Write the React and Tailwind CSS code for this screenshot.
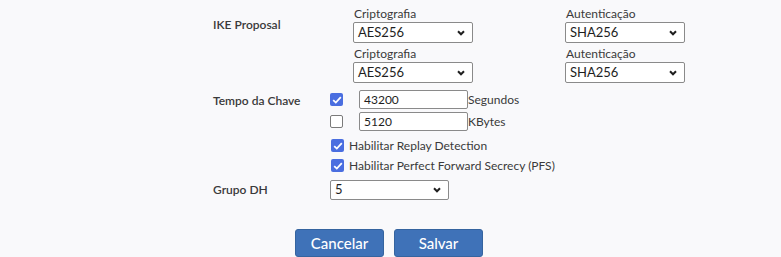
import React from 'react';

const Chevron = () => (
    <svg width="8" height="6" viewBox="0 0 8 6" className="shrink-0">
        <path d="M1 1.3 L4 4.3 L7 1.3" fill="none" stroke="#1f1f1f" strokeWidth="2" />
    </svg>
);

function FakeSelect({ value, width = 'w-[120px]', height = 'h-[21px]' }) {
    return (
        <div className={`${width} ${height} flex items-center justify-between bg-white border border-[#8a8a8a] rounded-[2px] pl-[4px] pr-[7px] text-[13px] text-[#1e1e1e]`}>
            <span>{value}</span>
            <Chevron />
        </div>
    );
}

function Checkbox({ checked }) {
    return checked ? (
        <div className="w-[13px] h-[13px] rounded-[2px] bg-[#4a6ee0] flex items-center justify-center">
            <svg width="10" height="8" viewBox="0 0 10 8">
                <path d="M1.2 4.2 L3.8 6.6 L8.8 1.2" fill="none" stroke="#fff" strokeWidth="1.8" />
            </svg>
        </div>
    ) : (
        <div className="w-[13px] h-[13px] rounded-[2px] bg-white border border-[#7a7a7a]" />
    );
}

function Field({ label, value }) {
    return (
        <div className="flex flex-col">
            <span className="text-[12px] leading-[16px] text-[#3a3a3a] pl-[1px]">{label}</span>
            <FakeSelect value={value} />
        </div>
    );
}

function TimeRow({ checked, value, unit }) {
    return (
        <div className="flex items-center h-[19px]">
            <Checkbox checked={checked} />
            <div className="ml-[16px] w-[109px] h-[19px] bg-white border border-[#8a8a8a] rounded-[2px] pl-[4px] flex items-center text-[12px] text-[#1e1e1e]">
                {value}
            </div>
            <span className="text-[12px] leading-[16px] text-[#3a3a3a]">{unit}</span>
        </div>
    );
}

export default function App() {
    return (
        <div className="w-[781px] h-[257px] bg-[#f9f9fb] pl-[213px] pt-[6px] font-['Lato',sans-serif] overflow-hidden">
            {/* IKE Proposal */}
            <div className="flex">
                <div className="w-[140px] pt-[11px] text-[12px] leading-[16px] text-[#3a3a3a] font-semibold">IKE Proposal</div>
                <div className="grid grid-cols-[212px_120px] gap-y-[3px]">
                    <Field label="Criptografia" value="AES256" />
                    <Field label="Autenticação" value="SHA256" />
                    <Field label="Criptografia" value="AES256" />
                    <Field label="Autenticação" value="SHA256" />
                </div>
            </div>

            {/* Tempo da Chave */}
            <div className="flex mt-[7px]">
                <div className="w-[117px] pt-[3px] text-[12px] leading-[16px] text-[#3a3a3a] font-semibold">Tempo da Chave</div>
                <div className="flex flex-col">
                    <TimeRow checked value="43200" unit="Segundos" />
                    <div className="mt-[3px]">
                        <TimeRow checked={false} value="5120" unit="KBytes" />
                    </div>
                    <div className="flex items-center h-[13px] mt-[8px] ml-[1px]">
                        <Checkbox checked />
                        <span className="ml-[5px] text-[12px] leading-[16px] text-[#3a3a3a]">Habilitar Replay Detection</span>
                    </div>
                    <div className="flex items-center h-[13px] mt-[7px] ml-[1px]">
                        <Checkbox checked />
                        <span className="ml-[5px] text-[12px] leading-[16px] text-[#3a3a3a]">Habilitar Perfect Forward Secrecy (PFS)</span>
                    </div>
                </div>
            </div>

            {/* Grupo DH */}
            <div className="flex items-center mt-[8px]">
                <div className="w-[117px] text-[12px] leading-[16px] text-[#3a3a3a] font-semibold">Grupo DH</div>
                <FakeSelect value="5" width="w-[119px]" height="h-[20px]" />
            </div>

            {/* Botões */}
            <div className="flex gap-[10px] mt-[29px] ml-[82px]">
                <button className="w-[89px] h-[28px] bg-[#3f72b8] border border-[#35649f] rounded-[3px] text-white text-[15px] font-medium">
                    Cancelar
                </button>
                <button className="w-[89px] h-[28px] bg-[#3f72b8] border border-[#35649f] rounded-[3px] text-white text-[15px] font-medium">
                    Salvar
                </button>
            </div>
        </div>
    );
}
